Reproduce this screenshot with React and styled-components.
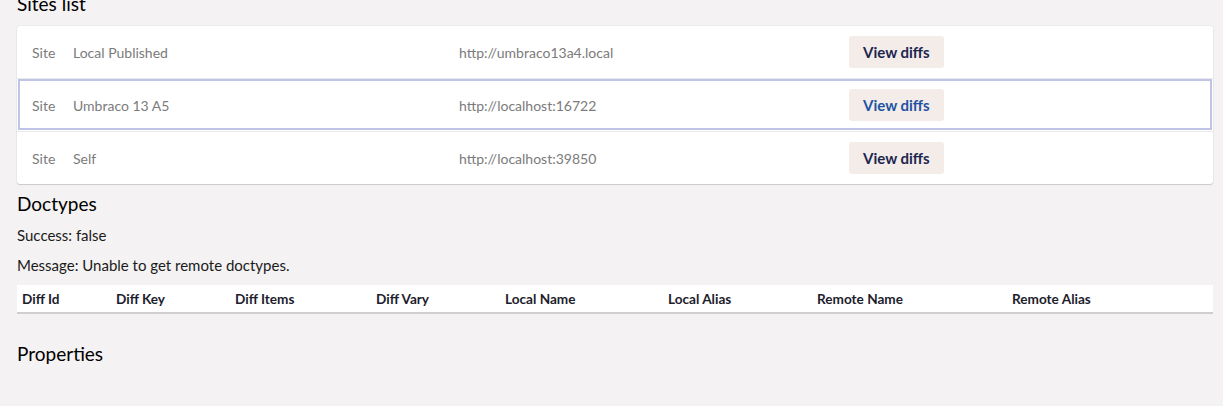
import React from "react";
import styled, { createGlobalStyle } from "styled-components";

const Global = createGlobalStyle`
  html, body { margin: 0; padding: 0; background: #f4f2f2; }
  body { font-family: Lato, "Open Sans", sans-serif; color: #1b1b1b; overflow: hidden; }
`;

const Page = styled.div`
  padding: 0 10px 40px 17px;
  margin-top: -8px;
`;

const Heading = styled.h4`
  margin: 0;
  font-size: 19px;
  font-weight: 400;
  line-height: 24px;
  color: #000;
`;

const Card = styled.div`
  margin: 10px 0 8px;
  background: #fff;
  border-radius: 3px;
  box-shadow: 0 1px 1px rgba(0, 0, 0, 0.14), 0 0 0 1px rgba(0, 0, 0, 0.03);
`;

const Row = styled.div`
  display: grid;
  grid-template-columns: 41px 386px 390px 1fr;
  align-items: center;
  height: 52px;
  padding-left: 15px;
  border-top: ${(p) => (p.$first ? "none" : "1px solid #e9e9eb")};
  outline: ${(p) => (p.$focused ? "2px solid #bfc3e6" : "none")};
  outline-offset: -3px;
  font-size: 14px;
  color: #7b7b7b;
`;

const Cell = styled.span`
  white-space: nowrap;
`;

const Button = styled.button`
  justify-self: start;
  height: 32px;
  padding: 0 14px;
  border: none;
  border-radius: 3px;
  background: #f3ece9;
  font-family: Lato, sans-serif;
  font-weight: 700;
  font-size: 15px;
  color: ${(p) => (p.$active ? "#2152a3" : "#1b264f")};
  cursor: pointer;
`;

const Text = styled.p`
  margin: 0 0 10px;
  font-size: 15px;
  line-height: 20px;
  color: #1b1b1b;

  &:first-of-type {
    margin-top: 9px;
  }
`;

const Table = styled.div`
  margin-top: 7px;
  background: #fff;
  border-bottom: 2px solid #cfcfcf;
  display: grid;
  grid-template-columns: 94px 119px 141px 129px 163px 149px 195px 1fr;
  height: 27px;
  align-items: center;
`;

const Th = styled.span`
  padding-left: 5px;
  font-size: 13.6px;
  font-weight: 700;
  color: #1d1d2c;
  white-space: nowrap;
`;

const Section = styled.div`
  margin-top: 28px;
`;

const sites = [
  { name: "Local Published", url: "http://umbraco13a4.local" },
  { name: "Umbraco 13 A5", url: "http://localhost:16722", focused: true },
  { name: "Self", url: "http://localhost:39850" },
];

const cols = [
  "Diff Id",
  "Diff Key",
  "Diff Items",
  "Diff Vary",
  "Local Name",
  "Local Alias",
  "Remote Name",
  "Remote Alias",
];

export default function App() {
  return (
    <>
      <Global />
      <Page>
        <Heading>Sites list</Heading>
        <Card>
          {sites.map((s, i) => (
            <Row key={s.name} $first={i === 0} $focused={s.focused}>
              <Cell>Site</Cell>
              <Cell>{s.name}</Cell>
              <Cell>{s.url}</Cell>
              <Button $active={s.focused}>View diffs</Button>
            </Row>
          ))}
        </Card>
        <Heading>Doctypes</Heading>
        <Text>Success: false</Text>
        <Text>Message: Unable to get remote doctypes.</Text>
        <Table>
          {cols.map((c) => (
            <Th key={c}>{c}</Th>
          ))}
        </Table>
        <Section>
          <Heading>Properties</Heading>
        </Section>
      </Page>
    </>
  );
}
